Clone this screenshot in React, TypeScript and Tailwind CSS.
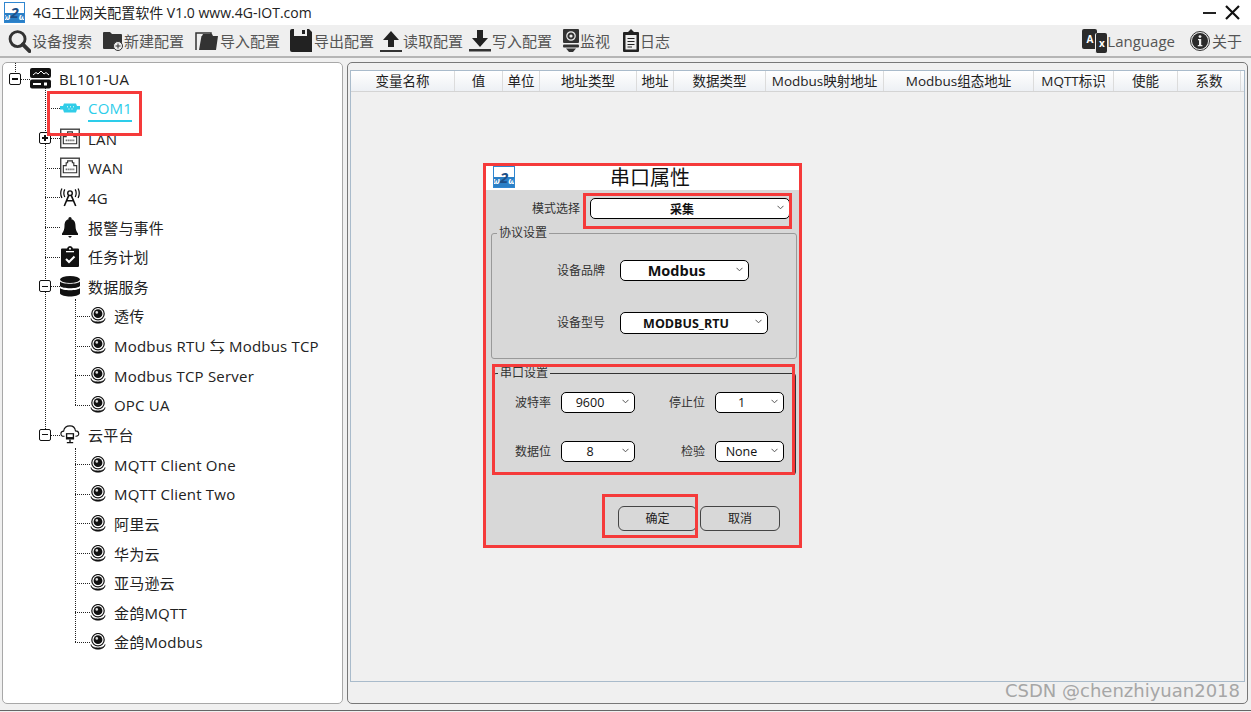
import React from "react";

const FONT = { fontFamily: '"Open Sans", "Noto Sans CJK SC", "Noto Sans", sans-serif' };

function Logo({ className = "" }: { className?: string }) {
  return (
    <div className={`relative overflow-hidden border border-[#2f86d0] bg-white shrink-0 ${className}`}>
      <div className="absolute left-0 right-0 bottom-0 h-[50%] bg-[#2a7fc6]" />
      <span className="absolute inset-0 flex items-center justify-center text-[15px] font-bold italic leading-none text-[#1d4f86]">
        <span className="text-white text-[9px] mt-[7px]">ω</span>
        <span>2</span>
        <span className="text-white text-[9px] mt-[7px]">ω</span>
      </span>
    </div>
  );
}

// toolbar icons
const SearchIcon = () => (
  <svg width="24" height="26" viewBox="0 0 25 26" className="shrink-0">
    <circle cx="11" cy="11" r="7.8" fill="none" stroke="#333" strokeWidth="3" />
    <path d="M16.5 16.5 L23.5 23.5" stroke="#333" strokeWidth="4" strokeLinecap="round" />
  </svg>
);
const NewFolderIcon = () => (
  <svg width="20" height="20" viewBox="0 0 20 20" className="shrink-0">
    <path d="M0 2 Q0 1 1 1 H7 L9 3 H18 Q19 3 19 4 V17 Q19 18 18 18 H1 Q0 18 0 17 Z" fill="#333" />
    <circle cx="15" cy="15" r="4.5" fill="#efefef" stroke="#333" strokeWidth="1" />
    <path d="M15 12.5 V17.5 M12.5 15 H17.5" stroke="#333" strokeWidth="1" />
  </svg>
);
const ImportIcon = () => (
  <svg width="24" height="20" viewBox="0 0 24 20" className="shrink-0">
    <path d="M1 19 V2 H16 V4" fill="none" stroke="#333" strokeWidth="1.5" />
    <path d="M4 19 L6.5 5 H7 L8 3 H17 L18 5 H23 L21 19 Z" fill="#333" />
  </svg>
);
const ExportIcon = () => (
  <svg width="23" height="23" viewBox="0 0 23 23" className="shrink-0">
    <path d="M0 2 Q0 0 2 0 H4 V7 H17 V0 H19 L22 3 V23 H2 Q0 23 0 21 Z" fill="#222" />
    <rect x="12" y="1" width="3" height="4" fill="#222" />
  </svg>
);
const UpIcon = () => (
  <svg width="22" height="22" viewBox="0 0 22 22" className="shrink-0">
    <path d="M11 1 L19 10 H14 V17 H8 V10 H3 Z" fill="#222" />
    <rect x="0" y="20" width="22" height="2" fill="#333" />
  </svg>
);
const DownIcon = () => (
  <svg width="22" height="22" viewBox="0 0 22 22" className="shrink-0">
    <path d="M11 17 L19 8 H14 V0 H8 V8 H3 Z" fill="#222" />
    <rect x="0" y="19" width="22" height="2.5" fill="#333" />
  </svg>
);
const MonitorIcon = () => (
  <svg width="16" height="23" viewBox="0 0 16 23" className="shrink-0">
    <path d="M1 0 H15 Q16 0 16 1 V13 Q16 14 15 14 H1 Q0 14 0 13 V1 Q0 0 1 0 Z" fill="#333" />
    <circle cx="8" cy="7" r="4.2" fill="none" stroke="#eee" strokeWidth="1.2" />
    <circle cx="8" cy="7" r="1.6" fill="#eee" />
    <rect x="0" y="15.5" width="16" height="3" rx="1" fill="#333" />
    <path d="M3 19.5 H13 L10 23 H6 Z" fill="#333" />
  </svg>
);
const LogIcon = () => (
  <svg width="16" height="23" viewBox="0 0 16 23" className="shrink-0">
    <path d="M5 3 L8 0 L11 3 H15 Q16 3 16 4 V22 Q16 23 15 23 H1 Q0 23 0 22 V4 Q0 3 1 3 Z" fill="#222" />
    <rect x="2.5" y="6" width="11" height="14.5" fill="#eee" />
    <path d="M4.5 9.5 H11.5 M4.5 12.5 H11.5 M4.5 15.5 H11.5 M4.5 18 H9" stroke="#222" strokeWidth="1" />
  </svg>
);
const LanguageIcon = () => (
  <div className="relative shrink-0 w-[25px] h-[24px]">
    <div className="absolute left-0 top-0 w-[15px] h-[20px] rounded-[2px] bg-[#2b2b2b] flex items-center justify-center text-[10px] leading-none font-bold text-white">A</div>
    <div className="absolute right-0 top-[4px] w-[12px] h-[20px] rounded-[2px] bg-[#2b2b2b] border-l border-[#efefef] flex items-center justify-center text-[10px] leading-none font-bold text-white">x</div>
  </div>
);
const InfoIcon = () => (
  <svg width="20" height="20" viewBox="0 0 20 20" className="shrink-0">
    <circle cx="10" cy="10" r="9.5" fill="none" stroke="#333" strokeWidth="1" />
    <circle cx="10" cy="10" r="8" fill="#2b2b2b" />
    <circle cx="10" cy="5.6" r="1.4" fill="#eee" />
    <path d="M8 8 H11.2 V14 H12.4 V15.2 H7.8 V14 H9 V9.2 H8 Z" fill="#eee" />
  </svg>
);

// tree icons
const DeviceIcon = () => (
  <svg width="22" height="21" viewBox="0 0 22 21">
    <rect x="0" y="0" width="21" height="10" rx="2" fill="#111" />
    <path d="M3 7 L6 4.5 L8 6 L11 3 L14 6 L16 4.5 L19 7" fill="none" stroke="#fff" strokeWidth="1" />
    <rect x="0" y="11.5" width="21" height="9" rx="2" fill="#111" />
    <rect x="3" y="15" width="8" height="2" fill="#fff" />
    <rect x="14" y="14.5" width="3" height="3" fill="#fff" />
  </svg>
);
const ComIcon = () => (
  <svg width="20" height="10" viewBox="0 0 20 10">
    <path d="M0 3 H3 L4 0.5 H16 L17 3 H20 V6.5 H17 L16 9.5 H4 L3 6.5 H0 Z" fill="#31cde8" />
    <path d="M7 3.8 H8 M10 3.8 H11 M13 3.8 H14 M8.5 6 H9.5 M11.5 6 H12.5" stroke="#fff" strokeWidth="1" />
  </svg>
);
const PortIcon = () => (
  <svg width="21" height="21" viewBox="0 0 21 21">
    <rect x="0.75" y="0.75" width="19.5" height="19.5" fill="#fff" stroke="#444" strokeWidth="1.5" />
    <path d="M3.5 16 V8.5 H6.5 V5.5 H8 V3.5 H13 V5.5 H14.5 V8.5 H17.5 V16 Z" fill="#fff" stroke="#333" strokeWidth="1.2" />
    <path d="M6 12.5 H15" stroke="#555" strokeWidth="2" strokeDasharray="1.2 0.8" />
  </svg>
);
const TowerIcon = () => (
  <svg width="21" height="20" viewBox="0 0 21 20">
    <circle cx="10.5" cy="6" r="2.4" fill="none" stroke="#111" strokeWidth="1.5" />
    <path d="M9.3 8 L4.5 19.5 M11.7 8 L16.5 19.5 M7.5 14 H13.5" stroke="#111" strokeWidth="1.7" fill="none" />
    <path d="M5 2 Q3 6 5 10 M2 1 Q-0.5 6 2 11 M16 2 Q18 6 16 10 M19 1 Q21.5 6 19 11" stroke="#111" strokeWidth="1.3" fill="none" />
  </svg>
);
const BellIcon = () => (
  <svg width="18" height="21" viewBox="0 0 18 21">
    <circle cx="9" cy="1.6" r="1.6" fill="#111" />
    <path d="M9 2 C5 2 3.5 5 3.5 9 C3.5 12 2.5 15 1 16.5 V18 H17 V16.5 C15.5 15 14.5 12 14.5 9 C14.5 5 13 2 9 2 Z" fill="#111" />
    <path d="M7 19 H11 L9 21 Z" fill="#111" />
  </svg>
);
const TaskIcon = () => (
  <svg width="18" height="21" viewBox="0 0 18 21">
    <path d="M1 2.5 H6 Q6.5 0 9 0 Q11.5 0 12 2.5 H17 Q18 2.5 18 3.5 V20 Q18 21 17 21 H1 Q0 21 0 20 V3.5 Q0 2.5 1 2.5 Z" fill="#111" />
    <circle cx="9" cy="2.7" r="1" fill="#fff" />
    <rect x="5" y="5" width="8" height="1.3" fill="#fff" />
    <path d="M5 13 L8 16 L13.5 10.5" fill="none" stroke="#fff" strokeWidth="2" />
  </svg>
);
const DbIcon = () => (
  <svg width="20" height="21" viewBox="0 0 20 21">
    <ellipse cx="10" cy="3.5" rx="10" ry="3.5" fill="#111" />
    <path d="M0 5.5 C2 8.5 18 8.5 20 5.5 V10 C18 13 2 13 0 10 Z" fill="#111" />
    <path d="M0 12 C2 15 18 15 20 12 V17.5 C18 21.5 2 21.5 0 17.5 Z" fill="#111" />
  </svg>
);
const CloudIcon = () => (
  <svg width="22" height="21" viewBox="0 0 22 21">
    <path d="M5 12.5 H4 C0 12.5 0 7 4 6.8 C4.5 2.5 8 1 11 1 C14 1 16.5 3 17 6.5 C21.5 6.5 22 12.5 17.5 12.5 H17" fill="none" stroke="#111" strokeWidth="1.2" />
    <rect x="6.5" y="9" width="9" height="7" fill="#111" />
    <rect x="8" y="10.3" width="6" height="3" fill="#fff" />
    <path d="M11 16 V19 M7.5 19.5 H14.5" stroke="#111" strokeWidth="1.5" />
  </svg>
);
const CameraIcon = () => (
  <svg width="16" height="17" viewBox="0 0 16 17">
    <circle cx="8" cy="6.7" r="6.2" fill="#fff" stroke="#111" strokeWidth="1.2" />
    <circle cx="8" cy="6.7" r="4.4" fill="#111" />
    <circle cx="6.8" cy="5.4" r="1.3" fill="#ddd" />
    <path d="M1 11.5 C1 16 15 16 15 11.5 C15 17.8 1 17.8 1 11.5 Z" fill="#111" stroke="#111" strokeWidth="0.6" />
  </svg>
);

const TOOLS: { label: string; icon: React.ReactNode; cls: string }[] = [
  { label: "设备搜索", icon: <SearchIcon />, cls: "ml-[7px]" },
  { label: "新建配置", icon: <NewFolderIcon />, cls: "ml-[11px]" },
  { label: "导入配置", icon: <ImportIcon />, cls: "ml-[11px]" },
  { label: "导出配置", icon: <ExportIcon />, cls: "ml-[10px]" },
  { label: "读取配置", icon: <UpIcon />, cls: "ml-[6px]" },
  { label: "写入配置", icon: <DownIcon />, cls: "ml-[6px]" },
  { label: "监视", icon: <MonitorIcon />, cls: "ml-[11px]" },
  { label: "日志", icon: <LogIcon />, cls: "ml-[13px]" },
];

function ToolItem({ label, icon, cls, gap = "gap-[1px]" }: { label: string; icon: React.ReactNode; cls: string; gap?: string }) {
  return (
    <div className={`flex items-center ${gap} ${cls}`}>
      {icon}
      <span className="text-[15px] leading-none text-[#555] mt-[2px]">{label}</span>
    </div>
  );
}

const COLUMNS: [string, string][] = [
  ["变量名称", "w-[104px]"],
  ["值", "w-[48px]"],
  ["单位", "w-[37px]"],
  ["地址类型", "w-[97px]"],
  ["地址", "w-[37px]"],
  ["数据类型", "w-[92px]"],
  ["Modbus映射地址", "w-[118px]"],
  ["Modbus组态地址", "w-[150px]"],
  ["MQTT标识", "w-[80px]"],
  ["使能", "w-[64px]"],
  ["系数", "w-[63px]"],
];

type Row = {
  label: string;
  level: 0 | 1 | 2;
  icon: React.ReactNode;
  box?: "+" | "-";
};

const ROWS: Row[] = [
  { label: "BL101-UA", level: 0, icon: <DeviceIcon />, box: "-" },
  { label: "COM1", level: 1, icon: <ComIcon /> },
  { label: "LAN", level: 1, icon: <PortIcon />, box: "+" },
  { label: "WAN", level: 1, icon: <PortIcon /> },
  { label: "4G", level: 1, icon: <TowerIcon /> },
  { label: "报警与事件", level: 1, icon: <BellIcon /> },
  { label: "任务计划", level: 1, icon: <TaskIcon /> },
  { label: "数据服务", level: 1, icon: <DbIcon />, box: "-" },
  { label: "透传", level: 2, icon: <CameraIcon /> },
  { label: "Modbus RTU ⇆ Modbus TCP", level: 2, icon: <CameraIcon /> },
  { label: "Modbus TCP Server", level: 2, icon: <CameraIcon /> },
  { label: "OPC UA", level: 2, icon: <CameraIcon /> },
  { label: "云平台", level: 1, icon: <CloudIcon />, box: "-" },
  { label: "MQTT Client One", level: 2, icon: <CameraIcon /> },
  { label: "MQTT Client Two", level: 2, icon: <CameraIcon /> },
  { label: "阿里云", level: 2, icon: <CameraIcon /> },
  { label: "华为云", level: 2, icon: <CameraIcon /> },
  { label: "亚马逊云", level: 2, icon: <CameraIcon /> },
  { label: "金鸽MQTT", level: 2, icon: <CameraIcon /> },
  { label: "金鸽Modbus", level: 2, icon: <CameraIcon /> },
];

function ExpandBox({ kind, cls }: { kind: "+" | "-"; cls: string }) {
  return (
    <span className={`absolute top-1/2 -translate-y-1/2 w-[12px] h-[12px] border-[1.5px] border-[#111] rounded-[2px] bg-white flex items-center justify-center ${cls}`}>
      <span className="w-[6px] h-[1.5px] bg-[#111]" />
      {kind === "+" && <span className="absolute w-[1.5px] h-[6px] bg-[#111]" />}
    </span>
  );
}

function TreeRow({ row }: { row: Row }) {
  const active = row.label === "COM1";
  return (
    <div className="flex items-center h-[29.65px]">
      {row.level === 0 && (
        <div className="relative w-[27px] h-full shrink-0">
          <span className="absolute left-[18px] right-0 top-1/2 border-t border-dotted border-[#222]" />
          <ExpandBox kind={row.box ?? "-"} cls="left-[6px]" />
        </div>
      )}
      {row.level === 1 && (
        <div className="relative w-[57px] h-full shrink-0">
          <span className="absolute left-[42px] right-0 top-1/2 border-t border-dotted border-[#222]" />
          {row.box && <ExpandBox kind={row.box} cls="left-[36px]" />}
        </div>
      )}
      {row.level === 2 && (
        <div className="relative w-[87px] h-full shrink-0">
          <span className="absolute left-[72px] right-0 top-1/2 border-t border-dotted border-[#222]" />
        </div>
      )}
      <div className={`flex items-center justify-center shrink-0 ${row.level === 0 ? "w-[22px]" : row.level === 1 ? "w-[20px]" : "w-[16px]"}`}>
        {row.icon}
      </div>
      <span
        className={`text-[15px] tracking-[0.2px] whitespace-nowrap ${row.level === 0 ? "ml-[7px]" : "ml-[8px]"} ${
          active ? "text-[#2dcdea] border-b-2 border-[#2dcdea] leading-[24px] mt-[2px]" : "text-[#222] leading-none mt-[2px]"
        }`}
      >
        {row.label}
      </span>
    </div>
  );
}

function Select({ value, cls, textCls = "text-[12px]" }: { value: string; cls: string; textCls?: string }) {
  return (
    <div className={`relative flex items-center justify-center bg-white border border-black rounded-[5px] shrink-0 pr-[16px] pt-[2px] ${cls} ${textCls}`}>
      <span className="leading-none text-[#111]">{value}</span>
      <svg width="7" height="5" viewBox="0 0 7 5" className="absolute right-[5px] top-[6px]">
        <path d="M0.5 0.8 L3.5 3.8 L6.5 0.8" fill="none" stroke="#555" strokeWidth="1" />
      </svg>
    </div>
  );
}

const Label = ({ text, cls }: { text: string; cls: string }) => (
  <span className={`text-[12px] leading-none text-right text-[#333] shrink-0 ${cls}`}>{text}</span>
);

function SerialDialog() {
  return (
    <div className="absolute left-[486px] top-[165px] w-[314px] h-[381px] bg-[#d8d8d8] flex flex-col">
      <div className="relative h-[25px] bg-white flex items-center shrink-0">
        <div className="absolute left-[7px] top-[1px]">
          <Logo className="w-[22px] h-[22px]" />
        </div>
        <span className="ml-[124px] text-[20px] leading-none text-[#111]">串口属性</span>
      </div>

      <div className="flex items-center mt-[8px]">
        <Label text="模式选择" cls="w-[94px]" />
        <Select value="采集" cls="ml-[10px] w-[200px] h-[21px]" textCls="text-[12px] font-bold" />
      </div>

      <fieldset className="ml-[5px] mr-[3px] mt-[6px] h-[134px] border border-[#999] rounded-[3px] px-0">
        <legend className="ml-[5px] px-[2px] text-[12px] leading-[16px] text-[#333]">协议设置</legend>
        <div className="flex items-center mt-[19px]">
          <Label text="设备品牌" cls="w-[113px]" />
          <Select value="Modbus" cls="ml-[15px] w-[129px] h-[21px]" textCls="text-[14.5px] font-bold" />
        </div>
        <div className="flex items-center mt-[31px]">
          <Label text="设备型号" cls="w-[113px]" />
          <Select value="MODBUS_RTU" cls="ml-[15px] w-[148px] h-[22px]" textCls="text-[12.5px] font-bold" />
        </div>
      </fieldset>

      <fieldset className="ml-[7px] mr-[4px] mt-[6px] h-[110px] border border-[#333] rounded-[3px]">
        <legend className="ml-[4px] px-[2px] text-[12px] leading-[16px] text-[#333]">串口设置</legend>
        <div className="flex items-center mt-[11px]">
          <Label text="波特率" cls="w-[57px]" />
          <Select value="9600" cls="ml-[10px] w-[74px] h-[21px]" textCls="text-[12.5px]" />
          <Label text="停止位" cls="w-[70px]" />
          <Select value="1" cls="ml-[10px] w-[69px] h-[21px]" textCls="text-[12.5px]" />
        </div>
        <div className="flex items-center mt-[28px]">
          <Label text="数据位" cls="w-[57px]" />
          <Select value="8" cls="ml-[10px] w-[74px] h-[21px]" textCls="text-[12.5px]" />
          <Label text="检验" cls="w-[70px]" />
          <Select value="None" cls="ml-[10px] w-[69px] h-[21px]" textCls="text-[12.5px]" />
        </div>
      </fieldset>

      <div className="flex mt-[31px] ml-[132px] gap-[3px]">
        <button className="w-[79px] h-[25px] border border-[#444] rounded-[6px] text-[12px] leading-none text-[#222]">确定</button>
        <button className="w-[80px] h-[25px] border border-[#444] rounded-[6px] text-[12px] leading-none text-[#222]">取消</button>
      </div>
    </div>
  );
}

export default function App() {
  return (
    <div style={FONT} className="relative w-[1251px] h-[712px] overflow-hidden bg-[#f0f0f0] flex flex-col">
      {/* title bar */}
      <div className="h-[25px] bg-white flex items-center shrink-0">
        <Logo className="ml-[4px] w-[21px] h-[21px]" />
        <span className="ml-[8px] text-[14px] leading-none text-[#222]">
          4G工业网关配置软件 V1.0 www.4G-IOT.com
        </span>
        <div className="ml-auto mr-[11px] flex items-center gap-[9px]">
          <span className="w-[13px] h-[2px] bg-[#222]" />
          <svg width="15" height="15" viewBox="0 0 15 15">
            <path d="M1 1 L14 14 M14 1 L1 14" stroke="#111" strokeWidth="2.2" />
          </svg>
        </div>
      </div>

      {/* toolbar */}
      <div className="h-[31px] bg-[#efefef] border-b-[2px] border-[#b5b5b5] flex items-center shrink-0 box-content">
        {TOOLS.map((t) => (
          <ToolItem key={t.label} {...t} />
        ))}
        <div className="ml-auto flex items-center">
          <ToolItem label="Language" icon={<LanguageIcon />} cls="" gap="gap-0" />
          <ToolItem label="关于" icon={<InfoIcon />} cls="ml-[15px] mr-[9px]" gap="gap-[2px]" />
        </div>
      </div>

      {/* main area */}
      <div className="flex-1 flex gap-[4px] pl-[2px] pr-[3px] pt-[4px] pb-[8px] min-h-0">
        <div className="relative w-[341px] bg-white border border-[#a8a8a8] rounded-[5px] pt-[1px] overflow-hidden">
          <span className="absolute left-[12px] top-0 h-[11px] border-l border-dotted border-[#222]" />
          <span className="absolute left-[42px] top-[25px] h-[347px] border-l border-dotted border-[#222]" />
          <span className="absolute left-[72px] top-[236px] h-[106px] border-l border-dotted border-[#222]" />
          <span className="absolute left-[72px] top-[385px] h-[194px] border-l border-dotted border-[#222]" />
          {ROWS.map((r) => (
            <TreeRow key={r.label} row={r} />
          ))}
        </div>

        <div className="flex-1 border border-[#777] rounded-[5px] pt-[7px] px-[2px] pb-[21px] bg-[#f0f0f0]">
          <div className="h-full border border-[#a9bbcb] bg-[#f0f0f0]">
            <div className="flex h-[21px] bg-gradient-to-b from-white to-[#edf0f4] border-b border-[#d4d4d4]">
              {COLUMNS.map(([name, w]) => (
                <div key={name} className={`${w} shrink-0 flex items-center justify-center pt-[1px] border-r border-[#dcdcdc] text-[13.5px] leading-none text-[#222] whitespace-nowrap`}>
                  {name}
                </div>
              ))}
            </div>
          </div>
        </div>
      </div>

      {/* window bottom edge */}
      <div className="absolute left-0 right-0 bottom-[1px] h-px bg-[#666]" />

      <SerialDialog />

      {/* red annotation boxes */}
      <div className="absolute left-[47px] top-[91px] w-[95px] h-[45px] border-[3px] border-[#f53a3a]" />
      <div className="absolute left-[483px] top-[163px] w-[319px] h-[385px] border-[3px] border-[#f53a3a]" />
      <div className="absolute left-[583px] top-[193px] w-[209px] h-[36px] border-[3px] border-[#f53a3a]" />
      <div className="absolute left-[492px] top-[364px] w-[303px] h-[111px] border-[3px] border-[#f53a3a]" />
      <div className="absolute left-[602px] top-[494px] w-[96px] h-[44px] border-[3px] border-[#f53a3a]" />

      <span className="absolute left-[1005px] top-[680px] whitespace-nowrap text-[18px] leading-[22px] text-[#a6a6a6]" style={{ fontFamily: '"DejaVu Sans", sans-serif' }}>
        CSDN @chenzhiyuan2018
      </span>
    </div>
  );
}
